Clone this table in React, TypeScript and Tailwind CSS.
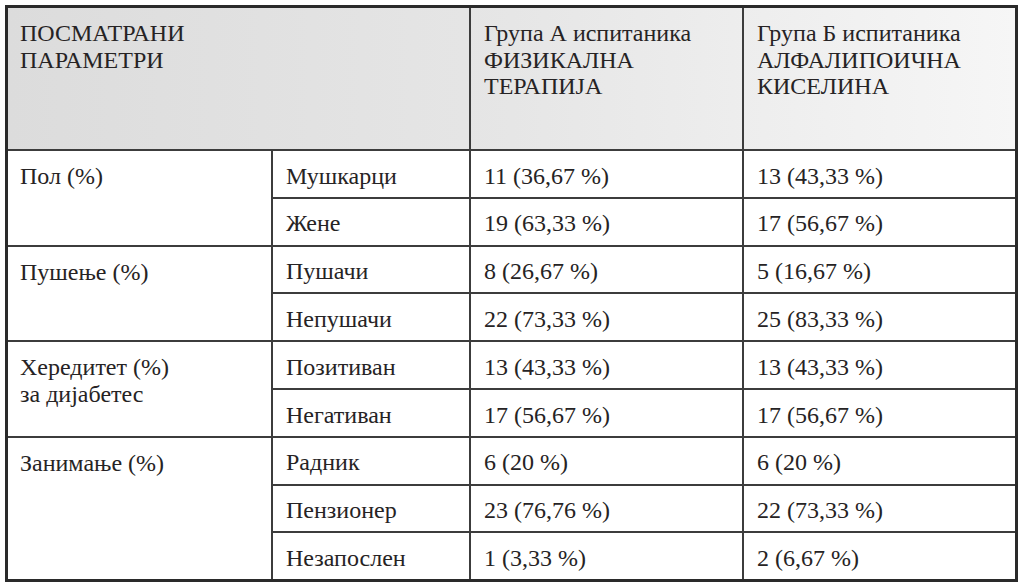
import React from 'react';

const groups = [
  {
    label: ['Пол (%)'],
    rows: [
      ['Мушкарци', '11 (36,67 %)', '13 (43,33 %)'],
      ['Жене', '19 (63,33 %)', '17 (56,67 %)'],
    ],
  },
  {
    label: ['Пушење (%)'],
    rows: [
      ['Пушачи', '8 (26,67 %)', '5 (16,67 %)'],
      ['Непушачи', '22 (73,33 %)', '25 (83,33 %)'],
    ],
  },
  {
    label: ['Хередитет (%)', 'за дијабетес'],
    rows: [
      ['Позитиван', '13 (43,33 %)', '13 (43,33 %)'],
      ['Негативан', '17 (56,67 %)', '17 (56,67 %)'],
    ],
  },
  {
    label: ['Занимање (%)'],
    rows: [
      ['Радник', '6 (20 %)', '6 (20 %)'],
      ['Пензионер', '23 (76,76 %)', '22 (73,33 %)'],
      ['Незапослен', '1 (3,33 %)', '2 (6,67 %)'],
    ],
  },
];

const App = () => {
  return (
    <div className="w-[1024px] h-[588px] bg-white pt-[5px] pl-[5px] text-[#262324] text-[24px] leading-[26.7px] font-['Liberation_Serif','Times_New_Roman',serif]">
      <div className="w-[1013px] border-[3px] border-[#2a2a2a]">
        {/* Header */}
        <div className="flex h-[143px] border-b-2 border-[#3c3c3c] bg-gradient-to-r from-[#dcdcdc] via-[#e6e6e6] to-[#f6f6f6]">
          <div className="w-[463px] shrink-0 border-r-2 border-[#3c3c3c] pl-[12px] pt-[12px]">
            <div>ПОСМАТРАНИ</div>
            <div>ПАРАМЕТРИ</div>
          </div>
          <div className="w-[273px] shrink-0 border-r-2 border-[#3c3c3c] pl-[13px] pt-[12px]">
            <div>Група А испитаника</div>
            <div>ФИЗИКАЛНА</div>
            <div>ТЕРАПИЈА</div>
          </div>
          <div className="flex-1 pl-[13px] pt-[12px]">
            <div>Група Б испитаника</div>
            <div>АЛФАЛИПОИЧНА</div>
            <div>КИСЕЛИНА</div>
          </div>
        </div>

        {/* Body */}
        {groups.map((group, gi) => (
          <div
            key={gi}
            className={`flex ${gi < groups.length - 1 ? 'border-b-2 border-[#3c3c3c]' : ''}`}
          >
            <div className="w-[265px] shrink-0 border-r-2 border-[#3c3c3c] pl-[12px] pt-[12px]">
              {group.label.map((line) => (
                <div key={line}>{line}</div>
              ))}
            </div>
            <div className="flex-1 flex flex-col">
              {group.rows.map((row, ri) => (
                <div
                  key={ri}
                  className={`flex items-center ${ri < group.rows.length - 1 ? 'h-[47.8px] border-b-2 border-[#3c3c3c]' : 'h-[45.8px]'}`}
                >
                  <div className="w-[198px] h-full flex items-center shrink-0 border-r-2 border-[#3c3c3c] pl-[13px] pt-[4px]">
                    {row[0]}
                  </div>
                  <div className="w-[273px] h-full flex items-center shrink-0 border-r-2 border-[#3c3c3c] pl-[13px] pt-[4px]">
                    {row[1]}
                  </div>
                  <div className="flex-1 h-full flex items-center pl-[13px] pt-[4px]">{row[2]}</div>
                </div>
              ))}
            </div>
          </div>
        ))}
      </div>
    </div>
  );
};

export default App;
